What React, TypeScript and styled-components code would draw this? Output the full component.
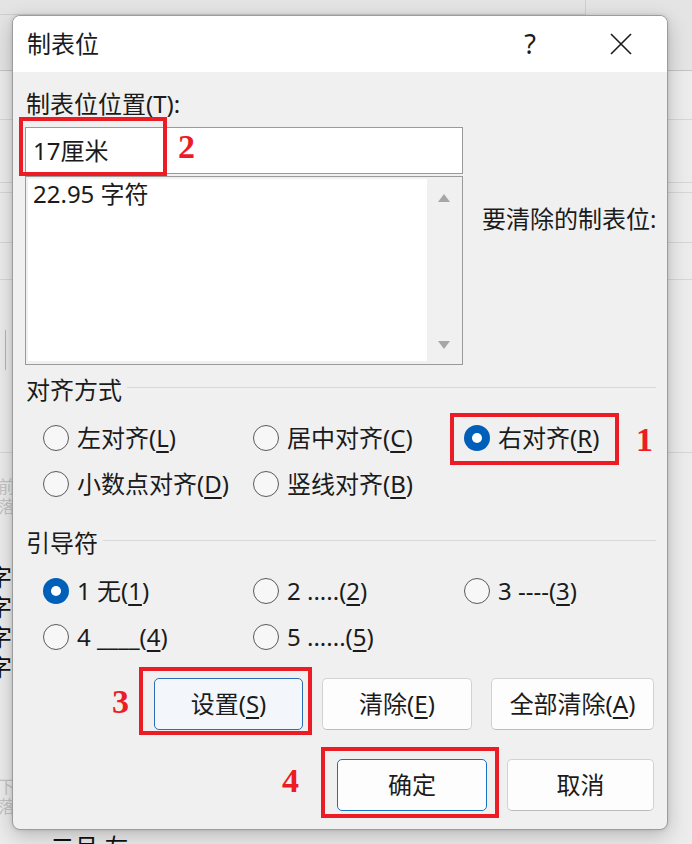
import React from "react";
import styled, { createGlobalStyle, css } from "styled-components";

const FONT = `"Noto Sans", "Noto Sans CJK SC", sans-serif`;

const GlobalStyle = createGlobalStyle`
  html, body { margin: 0; padding: 0; background: #ebebeb; }
  #root { width: 692px; height: 844px; }
`;

const Page = styled.div`
  position: relative;
  width: 692px;
  height: 844px;
  overflow: hidden;
  background: #ececec;
  font-family: ${FONT};
`;

/* ---------- background document (behind the dialog) ---------- */
const Backdrop = styled.div`
  display: flex;
  flex-direction: column;
  height: 100%;
`;
const Ribbon = styled.div`
  flex: none;
  height: 70px;
  background: #e4e4e4;
  border-bottom: 1px solid #c4c4c4;
  display: flex;
  align-items: flex-start;
`;
const RibbonGroup = styled.div`
  width: 585px;
  height: 14px;
  border-right: 1px solid #cfcfcf;
  border-bottom: 1px solid #cfcfcf;
`;
const DocBand = styled.div<{ $h: number }>`
  flex: none;
  height: ${(p) => p.$h}px;
  border-bottom: 1px solid #d6d6d6;
`;
const DocMark = styled.div<{ $gap: number; $h: number }>`
  flex: none;
  margin-top: ${(p) => p.$gap}px;
  margin-left: 5px;
  width: 1px;
  height: ${(p) => p.$h}px;
  background: #b5b5b5;
`;
const DocText = styled.div<{ $gap: number; $faded?: boolean; $size?: number; $indent?: number }>`
  flex: none;
  margin-top: ${(p) => p.$gap}px;
  margin-left: ${(p) => p.$indent ?? -12}px;
  font-size: ${(p) => p.$size ?? 24}px;
  line-height: ${(p) => (p.$size ? 20 : 30)}px;
  color: ${(p) => (p.$faded ? "#c4c4c4" : "#111")};
  white-space: nowrap;
`;

/* ---------- dialog ---------- */
const Dialog = styled.div`
  position: absolute;
  left: 12px;
  top: 15px;
  width: 656px;
  height: 815px;
  box-sizing: border-box;
  border: 1px solid #9c9c9c;
  border-radius: 8px;
  background: #f0f0f0;
  box-shadow: 0 6px 20px rgba(0, 0, 0, 0.22), 0 0 4px rgba(0, 0, 0, 0.12);
  display: flex;
  flex-direction: column;
  font-family: ${FONT};
  font-size: 24px;
  color: #1b1b1b;
`;
const TitleBar = styled.div`
  flex: none;
  height: 56px;
  background: #fff;
  border-radius: 7px 7px 0 0;
  display: flex;
  align-items: center;
  padding-left: 14px;
`;
const Title = styled.div`
  flex: 1;
  line-height: 30px;
`;
const CaptionButton = styled.div<{ $w: number }>`
  width: ${(p) => p.$w}px;
  height: 56px;
  display: flex;
  align-items: center;
  justify-content: center;
`;
const HelpGlyph = styled.span`
  font-family: "Noto Sans", sans-serif;
  font-size: 27px;
  line-height: 30px;
  font-weight: 400;
  color: #1b1b1b;
`;
const Body = styled.div`
  flex: 1;
  padding: 17px 11px 0 12px;
  display: flex;
  flex-direction: column;
`;
const FieldLabel = styled.div`
  line-height: 30px;
  padding-left: 1px;
`;
const TopGrid = styled.div`
  margin-top: 8px;
  display: grid;
  grid-template-columns: 438px 1fr;
  column-gap: 19px;
`;
const InputCol = styled.div`
  display: flex;
  flex-direction: column;
  gap: 2px;
`;
const TextInput = styled.div`
  position: relative;
  height: 47px;
  box-sizing: border-box;
  border: 1px solid #9a9a9a;
  background: #fff;
  display: flex;
  align-items: center;
  padding-left: 7px;
  line-height: 30px;
`;
const ListBox = styled.div`
  height: 189px;
  box-sizing: border-box;
  border: 1px solid #9a9a9a;
  padding: 2px 1px 3px 2px;
  background: #f0f0f0;
  display: flex;
`;
const ListItems = styled.div`
  flex: 1;
  background: #fff;
  padding: 0 0 0 5px;
  line-height: 30px;
`;
const ScrollTrack = styled.div`
  width: 34px;
  display: flex;
  flex-direction: column;
  align-items: center;
  justify-content: space-between;
  padding: 15px 0 12px;
`;
const ClearLabel = styled.div`
  padding-top: 77px;
  line-height: 30px;
  white-space: nowrap;
`;
const SectionHead = styled.div<{ $gap: number }>`
  margin-top: ${(p) => p.$gap}px;
  display: flex;
  align-items: flex-start;
  line-height: 30px;
  padding-left: 1px;
`;
const SectionRule = styled.div`
  flex: 1;
  height: 1px;
  background: #d9d9d9;
  margin: 12px 0 0 5px;
`;
const OptionGrid = styled.div`
  margin-top: 10px;
  display: grid;
  grid-template-columns: 210px 211px 1fr;
  grid-auto-rows: 46px;
  padding-left: 18px;
`;
const Option = styled.label`
  position: relative;
  display: flex;
  align-items: center;
  gap: 8px;
  line-height: 30px;
  white-space: nowrap;
`;
const RadioDot = styled.span<{ $on?: boolean }>`
  flex: none;
  width: 26px;
  height: 26px;
  box-sizing: border-box;
  border-radius: 50%;
  ${(p) =>
    p.$on
      ? css`
          background: #005fb8;
          display: flex;
          align-items: center;
          justify-content: center;
          &::after {
            content: "";
            width: 10px;
            height: 10px;
            border-radius: 50%;
            background: #fff;
          }
        `
      : css`
          background: #f7f7f7;
          border: 1.5px solid #5a5a5a;
        `}
`;
const Key = styled.span`
  text-decoration: underline;
  text-underline-offset: 4px;
  text-decoration-thickness: 1.5px;
`;
const ButtonRow = styled.div<{ $gap: number; $mt: number }>`
  margin-top: ${(p) => p.$mt}px;
  display: flex;
  justify-content: flex-end;
  gap: ${(p) => p.$gap}px;
  padding-right: 2px;
`;
const Button = styled.div<{ $w: number; $kind?: "focus" | "primary" }>`
  position: relative;
  width: ${(p) => p.$w}px;
  height: 52px;
  box-sizing: border-box;
  border-radius: 5px;
  display: flex;
  align-items: center;
  justify-content: center;
  line-height: 30px;
  white-space: nowrap;
  background: #fdfdfd;
  border: 1px solid #d2d2d2;
  border-bottom-color: #bdbdbd;
  ${(p) =>
    p.$kind === "focus" &&
    css`
      background: #f3f6fb;
      border: 1px solid #2a6cb5;
    `}
  ${(p) =>
    p.$kind === "primary" &&
    css`
      border: 1px solid #1a6fc4;
    `}
`;

/* ---------- red annotation overlays ---------- */
const Frame = styled.span<{ $l: number; $t: number; $w: number; $h: number }>`
  position: absolute;
  left: ${(p) => p.$l}px;
  top: ${(p) => p.$t}px;
  width: ${(p) => p.$w}px;
  height: ${(p) => p.$h}px;
  box-sizing: border-box;
  border: 4px solid #ec1c24;
  pointer-events: none;
`;
const Badge = styled.span<{ $l: number; $t: number }>`
  position: absolute;
  left: ${(p) => p.$l}px;
  top: ${(p) => p.$t}px;
  font-family: "Liberation Serif", serif;
  font-weight: 700;
  font-size: 34px;
  line-height: 34px;
  color: #ec1c24;
`;

const Arrow = ({ up }: { up?: boolean }) => (
  <svg width="12" height="8" viewBox="0 0 12 8">
    <path d={up ? "M6 0 L12 8 L0 8 Z" : "M0 0 L12 0 L6 8 Z"} fill="#a6a6a6" />
  </svg>
);

const CloseIcon = () => (
  <svg width="22" height="22" viewBox="0 0 22 22">
    <path d="M1 1 L21 21 M21 1 L1 21" stroke="#1b1b1b" strokeWidth="1.6" fill="none" />
  </svg>
);

type Opt = { label: React.ReactNode; on?: boolean; mark?: { badge: string } };

const alignOpts: Opt[] = [
  { label: <>左对齐(<Key>L</Key>)</> },
  { label: <>居中对齐(<Key>C</Key>)</> },
  { label: <>右对齐(<Key>R</Key>)</>, on: true, mark: { badge: "1" } },
  { label: <>小数点对齐(<Key>D</Key>)</> },
  { label: <>竖线对齐(<Key>B</Key>)</> },
];

const leaderOpts: Opt[] = [
  { label: <>1 无(<Key>1</Key>)</>, on: true },
  { label: <>2 .....(<Key>2</Key>)</> },
  { label: <>3 ----(<Key>3</Key>)</> },
  { label: <>4 ____(<Key>4</Key>)</> },
  { label: <>5 ......(<Key>5</Key>)</> },
];

const Options = ({ items }: { items: Opt[] }) => (
  <OptionGrid>
    {items.map((o, i) => (
      <Option key={i}>
        <RadioDot $on={o.on} />
        <span>{o.label}</span>
        {o.mark && (
          <>
            <Frame $l={-14} $t={-2} $w={169} $h={52} />
            <Badge $l={172} $t={8}>{o.mark.badge}</Badge>
          </>
        )}
      </Option>
    ))}
  </OptionGrid>
);

export default function App() {
  return (
    <Page>
      <GlobalStyle />
      <Backdrop>
        <Ribbon>
          <RibbonGroup />
        </Ribbon>
        <DocBand $h={48} />
        <DocBand $h={62} />
        <DocBand $h={9} />
        <DocBand $h={49} />
        <DocBand $h={36} />
        <DocMark $gap={50} $h={40} />
        <DocBand $h={82} />
        <DocText $gap={24} $size={17} $faded $indent={-2}>
          前<br />落
        </DocText>
        <DocText $gap={45}>字</DocText>
        <DocText $gap={0}>字</DocText>
        <DocText $gap={0}>字</DocText>
        <DocText $gap={0}>字</DocText>
        <DocText $gap={95} $size={17} $faded $indent={-2}>
          下<br />落
        </DocText>
        <DocText $gap={15} $indent={20}>一 二月 左</DocText>
      </Backdrop>

      <Dialog>
        <TitleBar>
          <Title>制表位</Title>
          <CaptionButton $w={90}>
            <HelpGlyph>?</HelpGlyph>
          </CaptionButton>
          <CaptionButton $w={92}>
            <CloseIcon />
          </CaptionButton>
        </TitleBar>

        <Body>
          <FieldLabel>
            制表位位置(<Key>T</Key>):
          </FieldLabel>
          <TopGrid>
            <InputCol>
              <TextInput>
                17厘米
                <Frame $l={-7} $t={-11} $w={148} $h={59} />
                <Badge $l={152} $t={2}>2</Badge>
              </TextInput>
              <ListBox>
                <ListItems>22.95 字符</ListItems>
                <ScrollTrack>
                  <Arrow up />
                  <Arrow />
                </ScrollTrack>
              </ListBox>
            </InputCol>
            <ClearLabel>要清除的制表位:</ClearLabel>
          </TopGrid>

          <SectionHead $gap={10}>
            对齐方式
            <SectionRule />
          </SectionHead>
          <Options items={alignOpts} />

          <SectionHead $gap={21}>
            引导符
            <SectionRule />
          </SectionHead>
          <Options items={leaderOpts} />

          <ButtonRow $mt={18} $gap={19}>
            <Button $w={149} $kind="focus">
              设置(<Key>S</Key>)
              <Frame $l={-16} $t={-12} $w={173} $h={68} />
              <Badge $l={-43} $t={6}>3</Badge>
            </Button>
            <Button $w={150}>
              清除(<Key>E</Key>)
            </Button>
            <Button $w={163}>
              全部清除(<Key>A</Key>)
            </Button>
          </ButtonRow>
          <ButtonRow $mt={29} $gap={20}>
            <Button $w={150} $kind="primary">
              确定
              <Frame $l={-17} $t={-13} $w={178} $h={71} />
              <Badge $l={-56} $t={4}>4</Badge>
            </Button>
            <Button $w={147}>取消</Button>
          </ButtonRow>
        </Body>
      </Dialog>
    </Page>
  );
}
